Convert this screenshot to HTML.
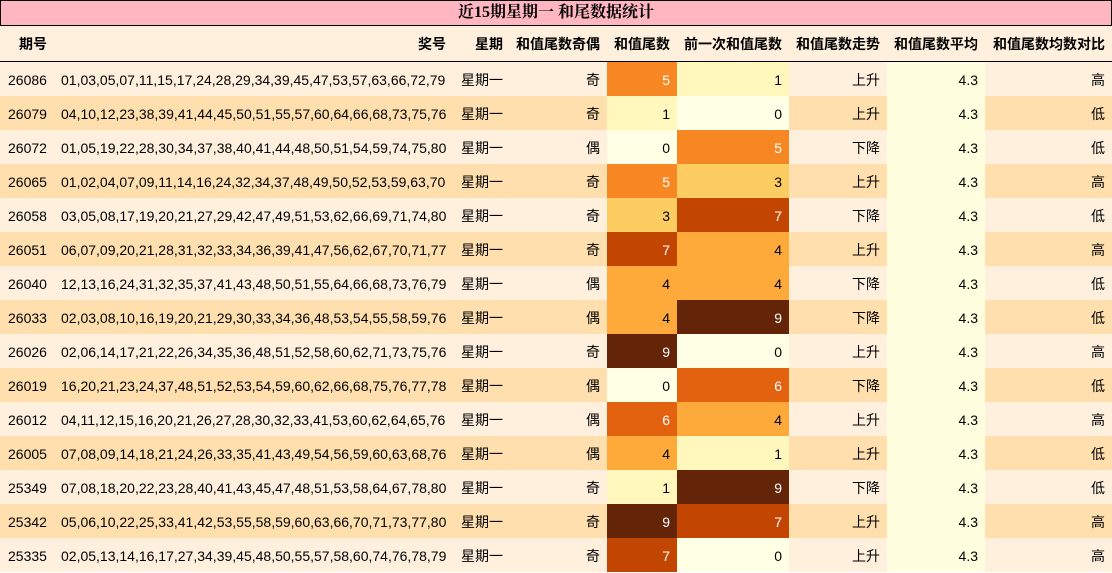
<!DOCTYPE html>
<html><head><meta charset="utf-8"><style>
body{margin:0;width:1112px;height:573px;overflow:hidden;background:#fff;font-family:"Liberation Sans","Noto Sans CJK SC",sans-serif;}
.title{position:absolute;left:0;top:0;width:1110px;height:24px;background:#ffb6c1;border:1px solid #000;text-align:center;font:bold 16px/24px "Liberation Serif","Noto Serif CJK SC",serif;}
table{position:absolute;left:0;top:26px;border-collapse:collapse;table-layout:fixed;width:1112px;font-size:14px;}
td,th{padding:2px 7px 0 0;height:32px;text-align:right;white-space:nowrap;overflow:hidden;}
th{height:34px;padding-top:1px;background:#fff0de;font-weight:bold;border-bottom:1px solid #000;}
tr.o td{background:#fff0de}
tr.e td{background:#ffdfae}
td.c1{text-align:left;padding-left:8px}
td.c2{text-align:left;padding-left:7px}
tr td.avg{background:#ffffe0}
.w{color:#fff}
</style></head><body>
<div class="title">近15期星期一 和尾数据统计</div>
<table>
<colgroup><col style="width:54px"><col style="width:399px"><col style="width:57px"><col style="width:97px"><col style="width:70px"><col style="width:112px"><col style="width:98px"><col style="width:98px"><col style="width:127px"></colgroup>
<tr><th style="text-align:left;padding-left:19px">期号</th><th>奖号</th><th>星期</th><th>和值尾数奇偶</th><th>和值尾数</th><th>前一次和值尾数</th><th>和值尾数走势</th><th>和值尾数平均</th><th>和值尾数均数对比</th></tr>
<tr class="o"><td class="c1">26086</td><td class="c2">01,03,05,07,11,15,17,24,28,29,34,39,45,47,53,57,63,66,72,79</td><td>星期一</td><td>奇</td><td class="w" style="background:#f68722">5</td><td style="background:#fff7bc">1</td><td>上升</td><td class="avg">4.3</td><td>高</td></tr>
<tr class="e"><td class="c1">26079</td><td class="c2">04,10,12,23,38,39,41,44,45,50,51,55,57,60,64,66,68,73,75,76</td><td>星期一</td><td>奇</td><td style="background:#fff7bc">1</td><td style="background:#ffffe5">0</td><td>上升</td><td class="avg">4.3</td><td>低</td></tr>
<tr class="o"><td class="c1">26072</td><td class="c2">01,05,19,22,28,30,34,37,38,40,41,44,48,50,51,54,59,74,75,80</td><td>星期一</td><td>偶</td><td style="background:#ffffe5">0</td><td class="w" style="background:#f68722">5</td><td>下降</td><td class="avg">4.3</td><td>低</td></tr>
<tr class="e"><td class="c1">26065</td><td class="c2">01,02,04,07,09,11,14,16,24,32,34,37,48,49,50,52,53,59,63,70</td><td>星期一</td><td>奇</td><td class="w" style="background:#f68722">5</td><td style="background:#fecd62">3</td><td>上升</td><td class="avg">4.3</td><td>高</td></tr>
<tr class="o"><td class="c1">26058</td><td class="c2">03,05,08,17,19,20,21,27,29,42,47,49,51,53,62,66,69,71,74,80</td><td>星期一</td><td>奇</td><td style="background:#fecd62">3</td><td class="w" style="background:#c34502">7</td><td>下降</td><td class="avg">4.3</td><td>低</td></tr>
<tr class="e"><td class="c1">26051</td><td class="c2">06,07,09,20,21,28,31,32,33,34,36,39,41,47,56,62,67,70,71,77</td><td>星期一</td><td>奇</td><td class="w" style="background:#c34502">7</td><td style="background:#fdaa3a">4</td><td>上升</td><td class="avg">4.3</td><td>高</td></tr>
<tr class="o"><td class="c1">26040</td><td class="c2">12,13,16,24,31,32,35,37,41,43,48,50,51,55,64,66,68,73,76,79</td><td>星期一</td><td>偶</td><td style="background:#fdaa3a">4</td><td style="background:#fdaa3a">4</td><td>下降</td><td class="avg">4.3</td><td>低</td></tr>
<tr class="e"><td class="c1">26033</td><td class="c2">02,03,08,10,16,19,20,21,29,30,33,34,36,48,53,54,55,58,59,76</td><td>星期一</td><td>偶</td><td style="background:#fdaa3a">4</td><td class="w" style="background:#642407">9</td><td>下降</td><td class="avg">4.3</td><td>低</td></tr>
<tr class="o"><td class="c1">26026</td><td class="c2">02,06,14,17,21,22,26,34,35,36,48,51,52,58,60,62,71,73,75,76</td><td>星期一</td><td>奇</td><td class="w" style="background:#642407">9</td><td style="background:#ffffe5">0</td><td>上升</td><td class="avg">4.3</td><td>高</td></tr>
<tr class="e"><td class="c1">26019</td><td class="c2">16,20,21,23,24,37,48,51,52,53,54,59,60,62,66,68,75,76,77,78</td><td>星期一</td><td>偶</td><td style="background:#ffffe5">0</td><td class="w" style="background:#e2620f">6</td><td>下降</td><td class="avg">4.3</td><td>低</td></tr>
<tr class="o"><td class="c1">26012</td><td class="c2">04,11,12,15,16,20,21,26,27,28,30,32,33,41,53,60,62,64,65,76</td><td>星期一</td><td>偶</td><td class="w" style="background:#e2620f">6</td><td style="background:#fdaa3a">4</td><td>上升</td><td class="avg">4.3</td><td>高</td></tr>
<tr class="e"><td class="c1">26005</td><td class="c2">07,08,09,14,18,21,24,26,33,35,41,43,49,54,56,59,60,63,68,76</td><td>星期一</td><td>偶</td><td style="background:#fdaa3a">4</td><td style="background:#fff7bc">1</td><td>上升</td><td class="avg">4.3</td><td>低</td></tr>
<tr class="o"><td class="c1">25349</td><td class="c2">07,08,18,20,22,23,28,40,41,43,45,47,48,51,53,58,64,67,78,80</td><td>星期一</td><td>奇</td><td style="background:#fff7bc">1</td><td class="w" style="background:#642407">9</td><td>下降</td><td class="avg">4.3</td><td>低</td></tr>
<tr class="e"><td class="c1">25342</td><td class="c2">05,06,10,22,25,33,41,42,53,55,58,59,60,63,66,70,71,73,77,80</td><td>星期一</td><td>奇</td><td class="w" style="background:#642407">9</td><td class="w" style="background:#c34502">7</td><td>上升</td><td class="avg">4.3</td><td>高</td></tr>
<tr class="o"><td class="c1">25335</td><td class="c2">02,05,13,14,16,17,27,34,39,45,48,50,55,57,58,60,74,76,78,79</td><td>星期一</td><td>奇</td><td class="w" style="background:#c34502">7</td><td style="background:#ffffe5">0</td><td>上升</td><td class="avg">4.3</td><td>高</td></tr>
</table>
</body></html>
